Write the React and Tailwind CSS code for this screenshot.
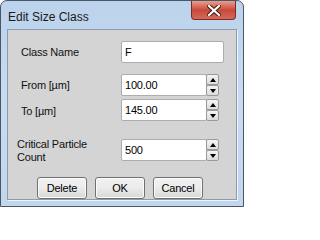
import React from 'react';

const font = { fontFamily: '"Liberation Sans", Arial, sans-serif' };

const SpinBox = ({ value }) => (
  <div className="flex h-[22px]">
    <div className="flex w-[86px] items-center rounded-[2px] border border-[#abadb3] bg-white pl-[3px] text-[11px] text-black">
      {value}
    </div>
    <div className="ml-[-1px] flex w-[13px] flex-col">
      <div className="flex h-[11px] items-center justify-center rounded-[2px] border border-[#9a9a9a] bg-gradient-to-b from-[#f4f4f4] to-[#dcdcdc]">
        <svg width="6" height="4" viewBox="0 0 6 4">
          <path d="M0 4 L3 0 L6 4 Z" fill="#000" />
        </svg>
      </div>
      <div className="flex h-[11px] items-center justify-center rounded-[2px] border border-[#9a9a9a] bg-gradient-to-b from-[#f4f4f4] to-[#dcdcdc]">
        <svg width="6" height="4" viewBox="0 0 6 4">
          <path d="M0 0 L6 0 L3 4 Z" fill="#000" />
        </svg>
      </div>
    </div>
  </div>
);

const Button = ({ children }) => (
  <button className="flex h-[22px] w-[50px] items-center justify-center rounded-[3px] border border-[#707070] bg-gradient-to-b from-[#f2f2f2] via-[#ebebeb] to-[#d8d8d8] text-[11px] tracking-[-0.2px] text-black shadow-[inset_0_0_0_1px_#fcfcfc]">
    {children}
  </button>
);

export default function App() {
  return (
    <div className="h-[207px] w-[244px] bg-white" style={font}>
      <div className="flex h-[207px] w-[244px] flex-col rounded-t-[7px] border border-[#4a5566] bg-gradient-to-b from-[#bcd3ec] via-[#c9dbef] to-[#c2d6ec]">
        {/* Title bar */}
        <div className="flex h-[28px] items-start justify-between">
          <div className="ml-[7px] mt-[7px] text-[12px] text-[#1a1a1a]">Edit Size Class</div>
          <div className="mr-[7px] flex h-[19px] w-[45px] items-center justify-center rounded-b-[4px] border border-t-0 border-[#7d2a22] bg-gradient-to-b from-[#e4a08f] via-[#c9473a] to-[#d26a5c]">
            <svg width="14" height="11" viewBox="0 0 14 11">
              <path d="M2 1 L12 10 M12 1 L2 10" stroke="#3b1713" strokeWidth="4" strokeLinecap="square" />
              <path d="M2 1 L12 10 M12 1 L2 10" stroke="#ffffff" strokeWidth="2.2" strokeLinecap="square" />
            </svg>
          </div>
        </div>

        {/* Client area */}
        <div className="ml-[6px] h-[171px] w-[230px] border border-[#8b9bb0] bg-[#d4d4d4] text-[11px] tracking-[-0.2px] text-[#111] shadow-[1px_1px_0_#eef4fb]">
          <div className="mt-[11px] flex items-center">
            <div className="w-[113px] pl-[13px]">Class Name</div>
            <div className="flex h-[22px] w-[103px] items-center rounded-[2px] border border-[#abadb3] bg-white pl-[3px] text-black">
              F
            </div>
          </div>

          <div className="mt-[11px] flex items-center">
            <div className="w-[113px] pl-[13px]">From [µm]</div>
            <SpinBox value="100.00" />
          </div>

          <div className="mt-[3px] flex items-center">
            <div className="w-[113px] pl-[13px] pt-[2px]">To [µm]</div>
            <SpinBox value="145.00" />
          </div>

          <div className="mt-[15px] flex items-center">
            <div className="w-[113px] pl-[9px] pt-[2px] leading-[13px]">
              Critical Particle
              <br />
              Count
            </div>
            <SpinBox value="500" />
          </div>

          <div className="mt-[13px] flex justify-center gap-[8px] pr-[4px]">
            <Button>Delete</Button>
            <Button>OK</Button>
            <Button>Cancel</Button>
          </div>
        </div>
      </div>
    </div>
  );
}
